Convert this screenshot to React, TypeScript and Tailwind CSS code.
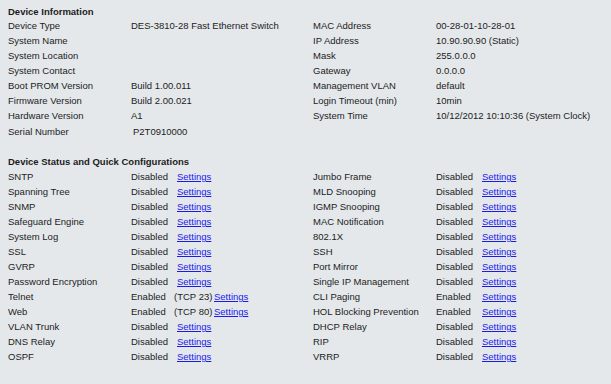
import { ReactNode } from 'react'

type Row = { label: string; value: ReactNode }

const leftInfo: Row[] = [
  { label: 'Device Type', value: 'DES-3810-28 Fast Ethernet Switch' },
  { label: 'System Name', value: '' },
  { label: 'System Location', value: '' },
  { label: 'System Contact', value: '' },
  { label: 'Boot PROM Version', value: 'Build 1.00.011' },
  { label: 'Firmware Version', value: 'Build 2.00.021' },
  { label: 'Hardware Version', value: 'A1' },
]

const rightInfo: Row[] = [
  { label: 'MAC Address', value: '00-28-01-10-28-01' },
  { label: 'IP Address', value: '10.90.90.90 (Static)' },
  { label: 'Mask', value: '255.0.0.0' },
  { label: 'Gateway', value: '0.0.0.0' },
  { label: 'Management VLAN', value: 'default' },
  { label: 'Login Timeout (min)', value: '10min' },
  { label: 'System Time', value: '10/12/2012 10:10:36 (System Clock)' },
]

type Status = { label: string; on?: boolean; port?: string }

const leftStatus: Status[] = [
  { label: 'SNTP' },
  { label: 'Spanning Tree' },
  { label: 'SNMP' },
  { label: 'Safeguard Engine' },
  { label: 'System Log' },
  { label: 'SSL' },
  { label: 'GVRP' },
  { label: 'Password Encryption' },
  { label: 'Telnet', on: true, port: '(TCP 23)' },
  { label: 'Web', on: true, port: '(TCP 80)' },
  { label: 'VLAN Trunk' },
  { label: 'DNS Relay' },
  { label: 'OSPF' },
]

const rightStatus: Status[] = [
  { label: 'Jumbo Frame' },
  { label: 'MLD Snooping' },
  { label: 'IGMP Snooping' },
  { label: 'MAC Notification' },
  { label: '802.1X' },
  { label: 'SSH' },
  { label: 'Port Mirror' },
  { label: 'Single IP Management' },
  { label: 'CLI Paging', on: true },
  { label: 'HOL Blocking Prevention', on: true },
  { label: 'DHCP Relay' },
  { label: 'RIP' },
  { label: 'VRRP' },
]

function InfoRow({ row }: { row: Row }) {
  return (
    <div className="flex h-[15px] items-center">
      <span className="w-[123px] shrink-0">{row.label}</span>
      <span className="whitespace-nowrap">{row.value}</span>
    </div>
  )
}

function StatusRow({ s }: { s: Status }) {
  return (
    <div className="flex h-[15px] items-center whitespace-nowrap">
      <span className="w-[123px] shrink-0">{s.label}</span>
      {s.port ? (
        <>
          <span className="w-[43px]">Enabled</span>
          <span className="w-[40px]">{s.port}</span>
        </>
      ) : (
        <span className="w-[46px]">{s.on ? 'Enabled' : 'Disabled'}</span>
      )}
      <a href="#" className="text-[#1a1aee] underline">
        Settings
      </a>
    </div>
  )
}

export default function App() {
  return (
    <div className="h-[384px] w-[611px] bg-[#e4e8eb] pl-2 pt-1 font-['Liberation_Sans',Arial,sans-serif] text-[9.5px] leading-[15px] text-[#1c1c1c]">
      <div className="flex">
        <div className="w-[305px]">
          <div className="h-[14px] font-bold">Device Information</div>
          {leftInfo.map((r) => (
            <InfoRow key={r.label} row={r} />
          ))}
          <div className="mt-[1px] flex h-[15px] items-center">
            <span className="w-[125px] shrink-0">Serial Number</span>
            <span className="whitespace-nowrap">P2T0910000</span>
          </div>
        </div>
        <div className="pt-[14px]">
          {rightInfo.map((r) => (
            <InfoRow key={r.label} row={r} />
          ))}
        </div>
      </div>

      <div className="mt-[15px] h-[15px] font-bold">Device Status and Quick Configurations</div>
      <div className="flex">
        <div className="w-[305px]">
          {leftStatus.map((s) => (
            <StatusRow key={s.label} s={s} />
          ))}
        </div>
        <div>
          {rightStatus.map((s) => (
            <StatusRow key={s.label} s={s} />
          ))}
        </div>
      </div>
    </div>
  )
}
